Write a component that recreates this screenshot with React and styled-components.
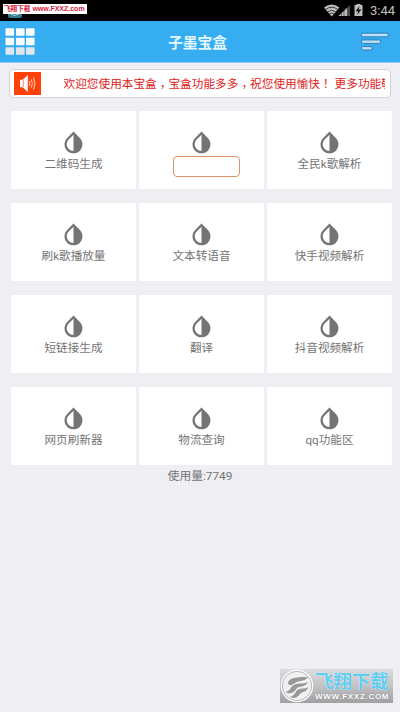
import React from 'react';
import styled, { createGlobalStyle } from 'styled-components';

const GlobalStyle = createGlobalStyle`
  * {
    box-sizing: border-box;
  }

  body {
    margin: 0;
    background: #eeeef3;
    font-family: Roboto, 'Noto Sans CJK SC', sans-serif;
  }
`;

const Screen = styled.div`
  position: relative;
  display: flex;
  flex-direction: column;
  width: 400px;
  height: 712px;
  overflow: hidden;
  background: #eeeef3;
`;

const StatusBar = styled.div`
  display: flex;
  align-items: center;
  justify-content: flex-end;
  height: 21px;
  padding-right: 5px;
  background: #000;
`;

const Clock = styled.span`
  margin-left: 5px;
  color: #c2c2c2;
  font-size: 13px;
  line-height: 21px;
`;

const SiteTag = styled.div`
  position: absolute;
  top: 4px;
  left: 3px;
  display: flex;
  align-items: center;
  width: 84px;
  height: 10px;
  padding-left: 1px;
  background: #fff;
  color: #d8203c;
  font-family: 'Liberation Sans', 'Noto Sans CJK SC', sans-serif;
  font-size: 6.6px;
  font-weight: bold;
  line-height: 10px;
  white-space: nowrap;
`;

const SiteUrl = styled.span`
  margin-left: 2px;
  font-size: 7px;
`;

const NoticeIcon = styled.svg`
  position: absolute;
  top: 8px;
  left: 8px;
`;

const Header = styled.header`
  display: flex;
  align-items: center;
  justify-content: space-between;
  height: 42px;
  padding: 0 11px 0 5px;
  background: #36adf1;
  border-bottom: 1px solid #8bcdf2;
`;

const Title = styled.h1`
  margin: 2px 1px 0 0;
  color: #e4f7ff;
  font-size: 14.8px;
  font-weight: bold;
  line-height: 20px;
`;

const Notice = styled.div`
  display: flex;
  align-items: center;
  height: 29px;
  margin: 6px 9px 0;
  padding: 0 5px 0 4px;
  background: #fff;
  border: 1px solid #d2d2d8;
  border-radius: 4px;
`;

const Speaker = styled.div`
  flex: none;
  width: 27px;
  height: 23px;
  background: #ff4009;

  svg {
    display: block;
  }
`;

const NoticeText = styled.div`
  flex: 1;
  margin-left: 22.5px;
  overflow: hidden;
  color: #e01a1a;
  font-size: 11.67px;
  line-height: 20px;
  white-space: pre;
`;

// full-width marks, centred in their cell
const Mark = styled.span`
  font-family: 'Noto Sans CJK TC', sans-serif;
  line-height: 1;
  vertical-align: ${props => props.$drop || 0}px;
`;

const Grid = styled.main`
  display: grid;
  grid-template-columns: repeat(3, 125px);
  grid-auto-rows: 78px;
  gap: 14px 3px;
  padding: 13px 11px 0;
`;

const Card = styled.div`
  display: flex;
  flex-direction: column;
  align-items: center;
  padding-top: 17.5px;
  background: #fff;
`;

const CardLabel = styled.span`
  margin-top: -0.5px;
  color: #747474;
  font-size: 11.6px;
  line-height: 18px;
`;

const EmptyBox = styled.div`
  width: 67px;
  height: 21px;
  margin: 0.5px 0 0 10px;
  border: 1px solid #df9468;
  border-radius: 4px;
`;

const Usage = styled.div`
  margin-top: 2px;
  color: #747474;
  font-size: 11.8px;
  line-height: 18px;
  text-align: center;
`;

const Watermark = styled.div`
  position: absolute;
  top: 669px;
  left: 280px;
  display: flex;
  align-items: center;
  width: 113px;
  height: 34px;
  background: linear-gradient(#dcdcdf, #c2c2c4 50%, #a0a0a2);
`;

const WatermarkText = styled.div`
  display: flex;
  flex-direction: column;
  margin-left: 1px;
`;

const WatermarkName = styled.span`
  color: #62cdee;
  font-size: 18.4px;
  font-weight: bold;
  line-height: 21px;
  text-shadow: 0 0 1px #fff;
  white-space: nowrap;
`;

const WatermarkUrl = styled.span`
  color: #fff;
  font-family: 'Liberation Sans', sans-serif;
  font-size: 8px;
  font-weight: bold;
  letter-spacing: 0.7px;
  line-height: 10px;
  text-shadow: 0 0 1px #777;
  white-space: nowrap;
`;

const items = [
  '二维码生成',
  '',
  '全民k歌解析',
  '刷k歌播放量',
  '文本转语音',
  '快手视频解析',
  '短链接生成',
  '翻译',
  '抖音视频解析',
  '网页刷新器',
  '物流查询',
  'qq功能区',
];

const DropIcon = () => (
  <svg width="27" height="27" viewBox="0 0 24 24" fill="#747474">
    <path d="M17.66 7.93L12 2.27 6.34 7.93c-3.12 3.12-3.12 8.19 0 11.31C7.9 20.8 9.95 21.58 12 21.58s4.1-.78 5.66-2.34c3.12-3.12 3.12-8.19 0-11.31zM12 19.59c-1.6 0-3.11-.62-4.24-1.76C6.62 16.69 6 15.19 6 13.59s.62-3.11 1.76-4.24L12 5.1v14.49z" />
  </svg>
);

const SystemIcons = () => (
  <svg width="42" height="15" viewBox="0 0 42 15">
    <path d="M1 4.4Q8.7-1.6 16.4 4.4L8.7 13.5z" fill="#bdbdbd" />
    <path d="M2.7 6.4Q8.7 2 14.7 6.4M4.7 8.7Q8.7 5.8 12.7 8.7M6.5 10.9Q8.7 9.3 10.9 10.9" fill="none" stroke="#000" strokeWidth="0.7" />
    <path d="M27 2v11H15.5z" fill="#4c4c4c" />
    <path d="M24 4.9v8.1h-8.5z" fill="#bdbdbd" />
    <path d="M18.5 9v4M21 7v6" stroke="#000" strokeWidth="0.5" />
    <path d="M31.5 2h2V1h4v1h2v11h-8z" fill="#bdbdbd" />
    <path d="M36.6 3l-4 5.2h2.6L34.2 12l4.2-5.5h-2.7z" fill="#111" />
  </svg>
);

const MenuIcon = () => (
  <svg width="30" height="27" viewBox="0 0 30 27">
    {[0, 9.5, 19].map((y) =>
      [0, 10.5, 20.5].map((x) => (
        <rect key={`${x}-${y}`} x={x + 0.5} y={y + 0.3} width="8.6" height="7.4" rx="0.8" fill={y === 19 ? '#e0e6ea' : '#fafcfd'} />
      ))
    )}
  </svg>
);

const SortIcon = () => (
  <svg width="28" height="19" viewBox="0 0 28 19" fill="#b9e2fb" stroke="#236da0" strokeWidth="0.8">
    <rect x="0.6" y="1.2" width="26.5" height="3.6" rx="1" />
    <rect x="0.6" y="8" width="18.8" height="3.4" rx="1" />
    <rect x="0.6" y="14.6" width="10.4" height="3.4" rx="1" />
  </svg>
);

const SpeakerIcon = () => (
  <svg width="27" height="23" viewBox="0 0 27 23">
    <path d="M6 7.8h2.7L13.8 3v17l-5.1-4.8H6z" fill="#fff" />
    <path d="M9.3 8v7" stroke="#ff4009" strokeWidth="0.6" />
    <path d="M15.2 9q1.4 2.5 0 5M17.3 7.3q2.2 4.2 0 8.4M19.5 5.5q3 6 0 12" fill="none" stroke="#ffd9cc" strokeWidth="1" />
  </svg>
);

const WatermarkLogo = () => (
  <svg width="34" height="34" viewBox="0 0 34 34">
    <circle cx="17" cy="17" r="15.5" fill="#f1f1f2" stroke="#fff" strokeWidth="1.5" />
    <circle cx="17" cy="17" r="14.7" fill="none" stroke="#a5a5a7" strokeWidth="0.8" />
    <path d="M8 15C8 9 14 8 28 8C25 13 19 11 15 14C12 16 11 17 8 15z" fill="#98989a" />
    <path d="M5 23C12 22 9 17 16 15C20 14 25 15 28 13C26 18 20 17 17 19C14 23 12 26 5 23z" fill="#98989a" />
    <path d="M10 28C17 26 14 21 20 20C23 19 26 20 28 18C27 24 22 22 20 25C17 29 14 30 10 28z" fill="#98989a" />
  </svg>
);

const App = () => {
  return (
    <Screen>
      <GlobalStyle />
      <StatusBar>
        <SystemIcons />
        <Clock>3:44</Clock>
      </StatusBar>
      <NoticeIcon width="14" height="10" viewBox="0 0 14 10">
        <rect width="14" height="10" rx="2" fill="#347f91" />
        <path d="M3 6q3 3 8 0" fill="none" stroke="#a9d4dd" />
      </NoticeIcon>
      <SiteTag>
        飞翔下载
        <SiteUrl>www.FXXZ.com</SiteUrl>
      </SiteTag>

      <Header>
        <MenuIcon />
        <Title>子墨宝盒</Title>
        <SortIcon />
      </Header>

      <Notice>
        <Speaker>
          <SpeakerIcon />
        </Speaker>
        <NoticeText>
          欢迎您使用本宝盒<Mark $drop={-3}>，</Mark>宝盒功能多多<Mark $drop={-3}>，</Mark>祝您使用愉快<Mark>！</Mark> 更多功能敬
        </NoticeText>
      </Notice>

      <Grid>
        {items.map((label, index) => (
          <Card key={index}>
            <DropIcon />
            {label ? <CardLabel>{label}</CardLabel> : <EmptyBox />}
          </Card>
        ))}
      </Grid>

      <Usage>使用量:7749</Usage>

      <Watermark>
        <WatermarkLogo />
        <WatermarkText>
          <WatermarkName>飞翔下载</WatermarkName>
          <WatermarkUrl>WWW.FXXZ.COM</WatermarkUrl>
        </WatermarkText>
      </Watermark>
    </Screen>
  );
};

export default App;
